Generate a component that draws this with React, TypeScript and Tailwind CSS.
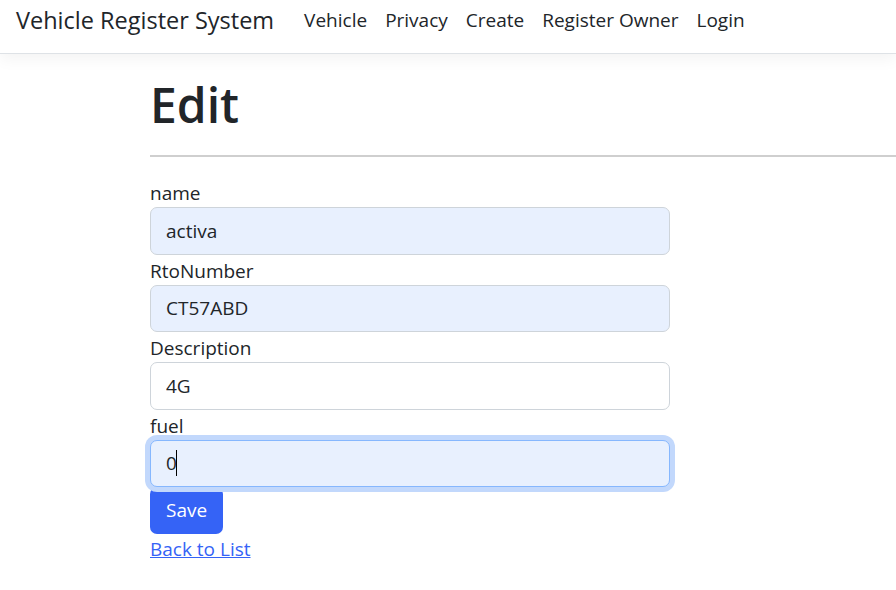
import React from "react";

const links = ["Vehicle", "Privacy", "Create", "Register Owner", "Login"];

const field =
  "block w-full h-[47.5px] px-[15px] border border-[#ced4da] rounded-[7px] outline-none";

export default function App() {
  return (
    <div className="min-h-screen bg-white text-[#212529] font-['Open_Sans',sans-serif]">
      <header className="h-[54px] border-b border-[#dee2e6] shadow-[0_5px_15px_rgba(0,0,0,0.05)] flex items-start pt-[2px] px-[16px]">
        <a className="text-[23.5px] leading-[36px] mr-[21px] whitespace-nowrap">Vehicle Register System</a>
        <nav className="flex pt-[1px]">
          {links.map((l) => (
            <a key={l} className="px-[9px] text-[19px] leading-[34px] whitespace-nowrap">
              {l}
            </a>
          ))}
        </nav>
      </header>

      <main className="pl-[150px] pt-[20px]">
        <h1 className="text-[48px] font-semibold leading-[61px]">Edit</h1>
        <div className="mt-[20px] h-[2px] bg-[#cfcfcf]" />

        <form className="mt-[20px] w-[520px] text-[19px]" onSubmit={(e) => e.preventDefault()}>
          <label className="block leading-[30px] pt-[1px]">name</label>
          <input readOnly value="activa" className={field + " bg-[#e8f0fe] -mt-[1px]"} />

          <label className="block leading-[30px] pt-[1px]">RtoNumber</label>
          <input readOnly value="CT57ABD" className={field + " bg-[#e8f0fe] -mt-[1px]"} />

          <label className="block leading-[30px] pt-[1px]">Description</label>
          <input readOnly value="4G" className={field + " bg-white -mt-[1px]"} />

          <label className="block leading-[30px] pt-[1px]">fuel</label>
          <div className="relative -mt-[1px]">
            <input
              readOnly
              value="0"
              className="block w-full h-[47.5px] px-[15px] border border-[#86b7fe] rounded-[7px] bg-[#e8f0fe] outline-none ring-[5px] ring-[#c2d8fc]"
            />
            <span className="absolute left-[26px] top-[10px] h-[26px] w-px bg-black" />
          </div>

          <button className="h-[47px] px-[16px] rounded-[7px] bg-[#3563f6] text-white text-[19px]">
            Save
          </button>
          <div className="leading-[30px]">
            <a href="#" className="text-[#3563f6] underline">
              Back to List
            </a>
          </div>
        </form>
      </main>
    </div>
  );
}
